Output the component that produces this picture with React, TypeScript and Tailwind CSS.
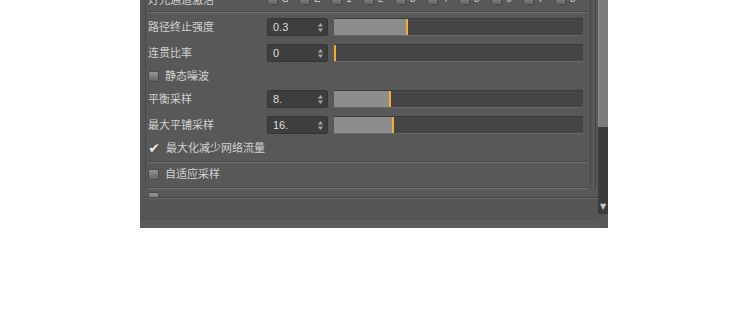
const font = "font-['Noto_Sans_CJK_SC','Noto_Sans',sans-serif]";

function Checkbox() {
  return (
    <span className="w-[11px] h-[11px] shrink-0 rounded-[2px] border border-[#4a4a4a] bg-gradient-to-b from-[#959595] to-[#656565]" />
  );
}

function Divider() {
  return <div className="h-[2px] border-t border-[#4b4b4b] border-b border-b-[#6e6e6e]" />;
}

function Spinner() {
  return (
    <svg width="5" height="9" viewBox="0 0 5 9" className="shrink-0">
      <path d="M2.5 0 L5 3.5 L0 3.5 Z" fill="#a9a9a9" />
      <path d="M0 5.5 L5 5.5 L2.5 9 Z" fill="#a9a9a9" />
    </svg>
  );
}

function SliderRow({ label, value, fill, className }: { label: string; value: string; fill: number; className?: string }) {
  return (
    <div className={`flex items-center h-[18px] ${className ?? ""}`}>
      <span className="w-[119px] text-[11px] leading-none text-[#d2d2d2] -mt-[2px]">{label}</span>
      <div className="w-[61px] h-[18px] flex items-center justify-between pl-[5px] pr-[4px] bg-[#3e3e3e] border border-[#343434] rounded-[2px]">
        <span className="font-['Liberation_Sans',sans-serif] text-[11px] text-[#dcdcdc] leading-none">{value}</span>
        <Spinner />
      </div>
      <div className="ml-[6px] w-[249px] h-[18px] flex bg-[#454545] border-t border-[#3a3a3a] border-b border-b-[#6a6a6a]">
        <div className="h-full bg-[#8d8d8d]" style={{ width: fill }} />
        <div className="h-full w-[2px] bg-[#f2ad2c]" />
      </div>
    </div>
  );
}

function CheckRow({ label, checked, className }: { label: string; checked?: boolean; className?: string }) {
  return (
    <div className={`flex items-center h-[12px] ${className ?? ""}`}>
      {checked ? (
        <span className="w-[12px] h-[12px] flex items-center justify-center font-['DejaVu_Sans',sans-serif] text-[14px] leading-none text-[#eeeeee] [text-shadow:0_0_1px_#222]">
          ✔
        </span>
      ) : (
        <Checkbox />
      )}
      <span className="ml-[6px] text-[11px] leading-none text-[#d2d2d2] -mt-[1px]">{label}</span>
    </div>
  );
}

const lightIds = ["S", "E", "1", "2", "3", "4", "5", "6", "7", "8"];

export default function App() {
  return (
    <div className={`w-[750px] h-[316px] bg-white ${font}`}>
      <div className="ml-[140px] w-[468px] h-[228px] bg-[#585858] flex overflow-hidden">
        <div className="w-[458px] flex flex-col">
          <div className="h-[197px] overflow-hidden pl-[5px]">
            <div className="h-full w-[451px] border-l border-r border-[#474747]">
              <div className="h-full w-[445px] border-r border-[#474747] pl-[2px] pr-[2px]">
                <div className="flex items-center h-[14px] -mt-[8px]">
                  <span className="w-[119px] text-[11px] leading-none text-[#d2d2d2]">灯光通道激活</span>
                  <div className="flex gap-[21px]">
                    {lightIds.map((id) => (
                      <div key={id} className="flex items-center gap-[4px] w-[11px]">
                        <Checkbox />
                        <span className="font-['Liberation_Sans',sans-serif] text-[10px] leading-none text-[#cfcfcf]">{id}</span>
                      </div>
                    ))}
                  </div>
                </div>
                <div className="mt-[5px]">
                  <Divider />
                </div>
                <div className="h-[5px]" />
                <SliderRow label="路径终止强度" value="0.3" fill={72} />
                <SliderRow label="连贯比率" value="0" fill={0} className="mt-[8px]" />
                <CheckRow label="静态噪波" className="mt-[8px]" />
                <SliderRow label="平衡采样" value="8." fill={55} className="mt-[8px]" />
                <SliderRow label="最大平铺采样" value="16." fill={58} className="mt-[8px]" />
                <CheckRow label="最大化减少网络流量" checked className="mt-[8px]" />
                <div className="mt-[7px]">
                  <Divider />
                </div>
                <CheckRow label="自适应采样" className="mt-[5px]" />
                <div className="mt-[7px]">
                  <Divider />
                </div>
                <CheckRow label="" className="mt-[2px]" />
              </div>
            </div>
          </div>
          <div className="flex-1 flex flex-col border-t border-[#474747]">
            <div className="h-[20px] bg-[#555555] border-t border-[#676767]" />
            <div className="flex-1 bg-[#595959] border-t border-[#505050]" />
          </div>
        </div>
        <div className="w-[10px] flex flex-col">
          <div className="h-[127px] bg-[#7b7b7b] border-l border-[#8a8a8a]" />
          <div className="h-[73px] bg-[#3c3c3c]" />
          <div className="h-[14px] bg-[#3c3c3c] flex items-center justify-center font-['DejaVu_Sans',sans-serif] text-[8px] leading-none text-[#c8c8c8]">
            ▼
          </div>
        </div>
      </div>
    </div>
  );
}
